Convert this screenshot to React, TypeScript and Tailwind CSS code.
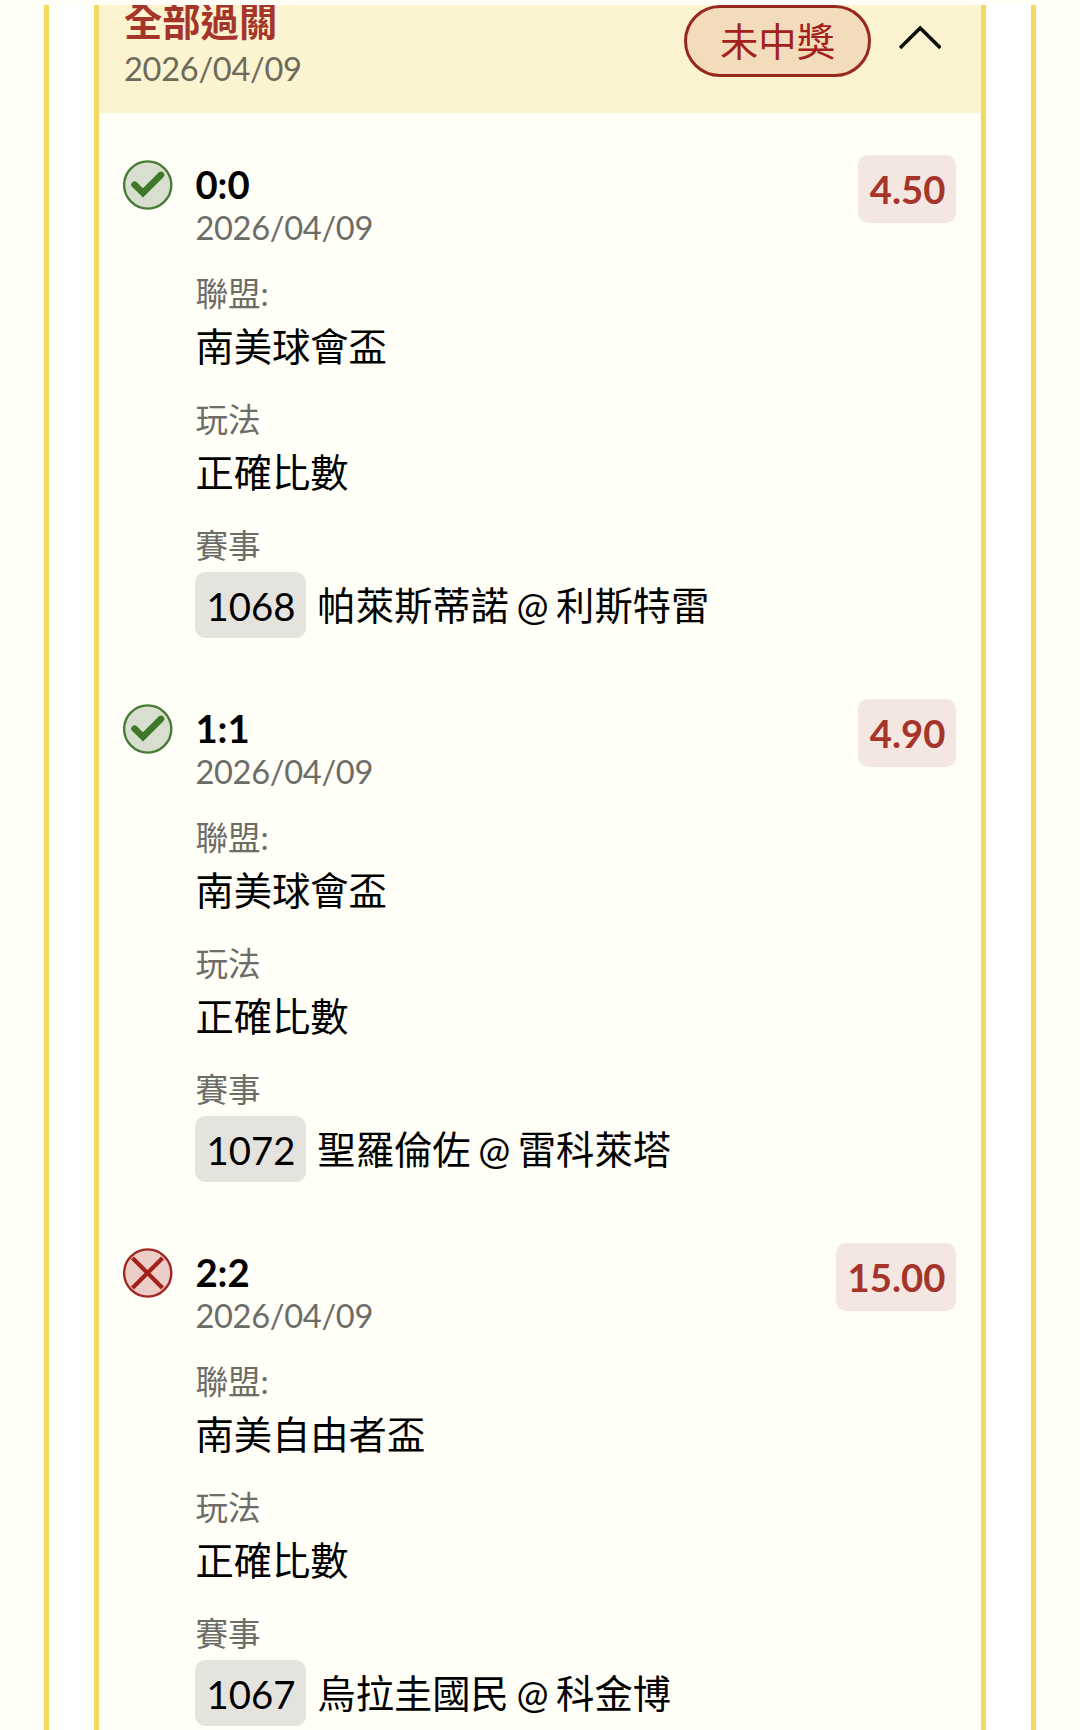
type Leg = {
  score: string;
  won: boolean;
  odds: string;
  league: string;
  code: string;
  match: string;
};

const legs: Leg[] = [
  { score: '0:0', won: true, odds: '4.50', league: '南美球會盃', code: '1068', match: '帕萊斯蒂諾 @ 利斯特雷' },
  { score: '1:1', won: true, odds: '4.90', league: '南美球會盃', code: '1072', match: '聖羅倫佐 @ 雷科萊塔' },
  { score: '2:2', won: false, odds: '15.00', league: '南美自由者盃', code: '1067', match: '烏拉圭國民 @ 科金博' },
];

function ResultIcon({ won }: { won: boolean }) {
  return won ? (
    <svg className="block size-[50px]" viewBox="0 0 50 50" fill="none">
      <circle cx="24.7" cy="25" r="23.6" fill="#d8dfce" stroke="#4a7a3a" strokeWidth="2.4" />
      <path d="M11.5 24.7 L20 32.8 L38 14.9" stroke="#3f772b" strokeWidth="6.6" strokeLinecap="round" />
    </svg>
  ) : (
    <svg className="block size-[50px]" viewBox="0 0 50 50" fill="none">
      <circle cx="24.7" cy="25" r="23.6" fill="#edcdc7" stroke="#a02822" strokeWidth="2.4" />
      <path d="M9.5 10 L39.5 40 M39.5 10 L9.5 40" stroke="#a3211b" strokeWidth="4.2" />
    </svg>
  );
}

function Field({ label, value }: { label: string; value: string }) {
  return (
    <div className="mb-[28px]">
      <div className="text-[32.6px] leading-[40px] text-[#6c6c68]">{label}</div>
      <div className="mt-[8px] mb-[30px] text-[38.3px] leading-[48px]">{value}</div>
    </div>
  );
}

function LegItem({ leg }: { leg: Leg }) {
  return (
    <li className="flex h-[544px] items-start">
      <div className="mt-[6px] shrink-0">
        <ResultIcon won={leg.won} />
      </div>
      <div className="mt-[7px] ml-[22.4px] grow">
        <div className="text-[38.3px] leading-[47px] font-bold">{leg.score}</div>
        <div className="mb-[26px] text-[32.6px] leading-[40px] tracking-[-0.3px] text-[#6c6c68]">2026/04/09</div>
        <Field label="聯盟:" value={leg.league} />
        <Field label="玩法" value="正確比數" />
        <div className="text-[32.6px] leading-[40px] text-[#6c6c68]">賽事</div>
        <div className="-ml-[0.4px] mt-[6px] flex items-center text-[38.3px]">
          <span className="h-[66px] rounded-[10px] bg-[#e4e3dd] pr-[10.5px] pl-[11.5px] leading-[68px]">{leg.code}</span>
          <span className="ml-[11.5px] leading-[66px] [word-spacing:-2.2px]">{leg.match}</span>
        </div>
      </div>
      <div className="mt-px h-[68px] shrink-0 rounded-[10px] bg-[#f4e7e1] pr-[10.5px] pl-[11.5px] text-[38.3px] leading-[69px] font-bold text-[#a5352b]">
        {leg.odds}
      </div>
    </li>
  );
}

export default function App() {
  return (
    <div className="h-[1730px] w-[1080px] overflow-hidden bg-[#fffef7] pt-[5px] font-[Lato,'Noto_Sans_CJK_TC',sans-serif] text-black">
      <div className="ml-[44px] h-[1725px] w-[992px] border-x-[5.5px] border-[#f3d961] bg-white px-[45px]">
        <section className="h-[1725px] overflow-hidden border-x-[5.5px] border-[#f3d961] bg-[#fffef7]">
          <header className="flex h-[108px] items-start bg-[#fcf3d0] pr-[40px] pl-[25px]">
            <div className="-mt-[8px] grow">
              <h2 className="text-[38.3px] leading-[48px] font-bold text-[#a5352b]">全部過關</h2>
              <div className="mt-[4px] text-[32.6px] leading-[40px] tracking-[-0.3px] text-[#6d6a5c]">2026/04/09</div>
            </div>
            <span className="flex h-[72px] w-[187px] items-center justify-center rounded-full border-[3px] border-[#96281e] bg-[#f3dcbb] text-[38.3px] leading-[48px] text-[#a3211b]">
              未中獎
            </span>
            <svg className="mt-[16px] ml-[28px] h-[32px] w-[42px]" viewBox="0 0 42 32" fill="none">
              <path d="M1 27 L21.2 7 L41.4 27" stroke="#0d0d0a" strokeWidth="3.7" />
            </svg>
          </header>
          <ul className="mt-[41px] pr-[25px] pl-[24px]">
            {legs.map((leg) => (
              <LegItem key={leg.code} leg={leg} />
            ))}
          </ul>
        </section>
      </div>
    </div>
  );
}
